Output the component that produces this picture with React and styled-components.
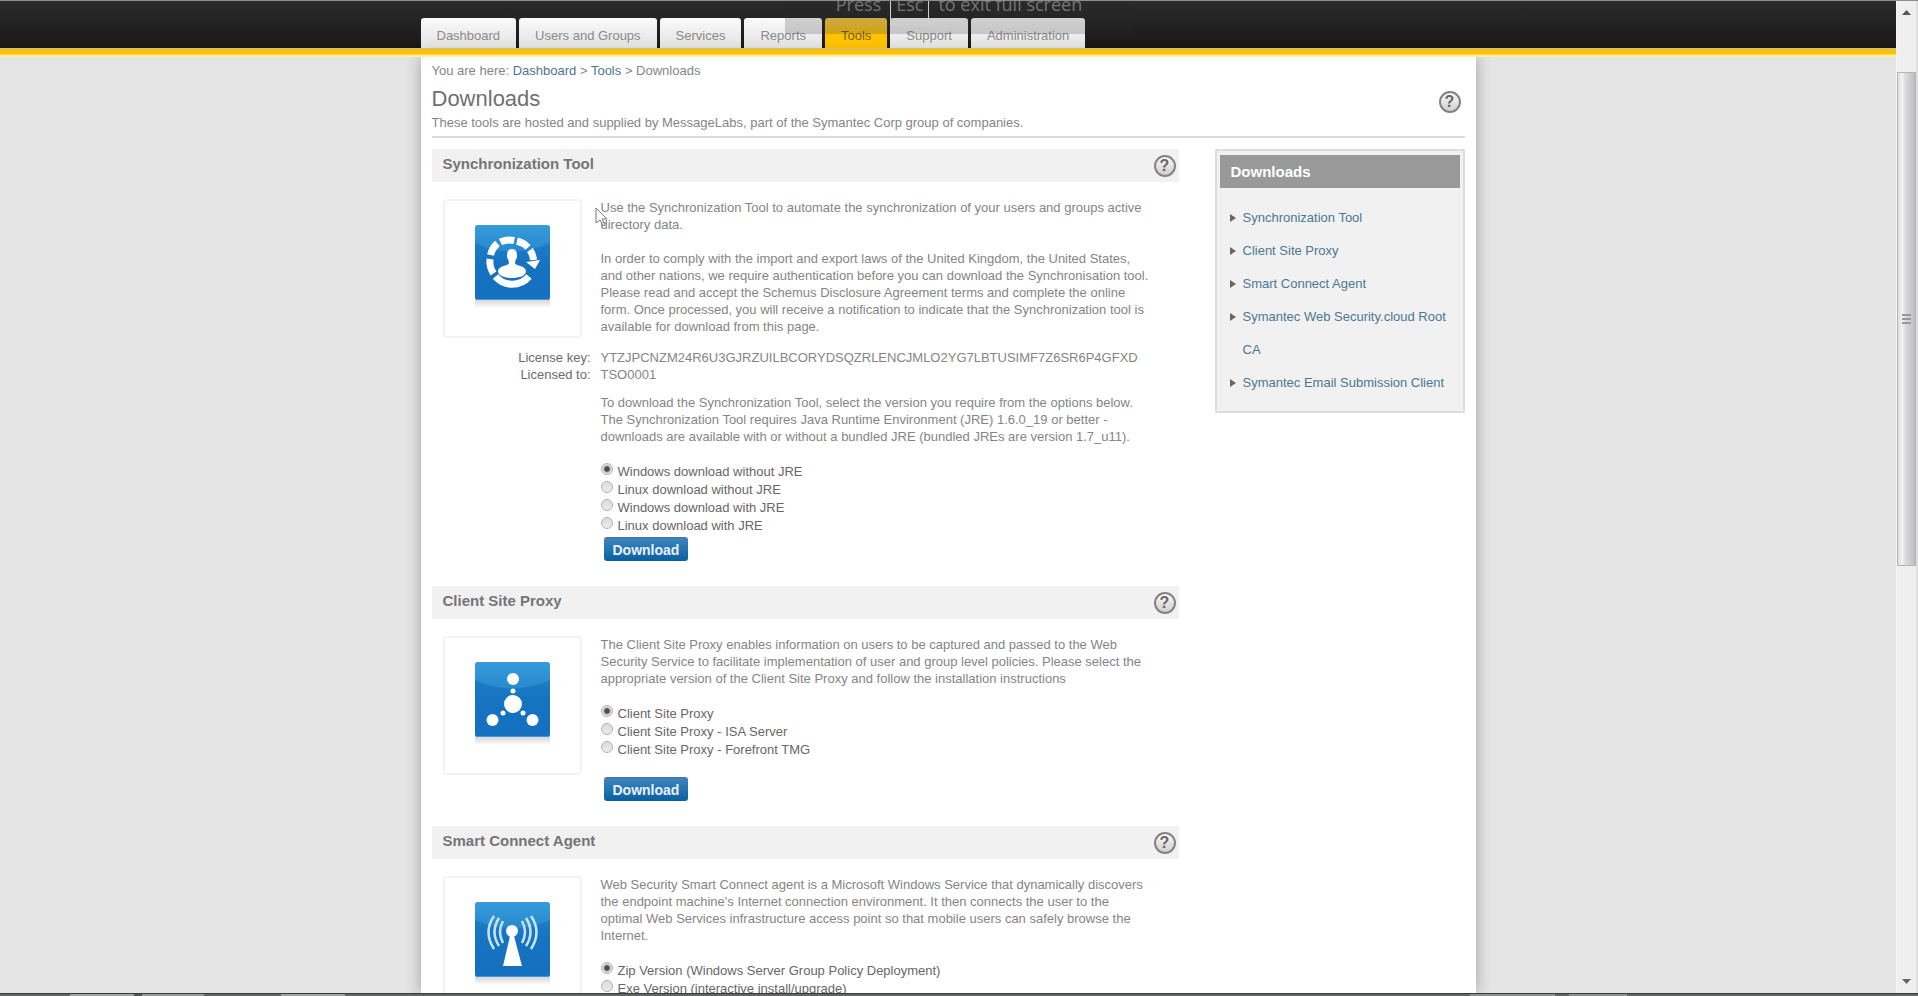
import React from 'react'
import styled, { createGlobalStyle } from 'styled-components'

const tabs = ['Dashboard', 'Users and Groups', 'Services', 'Reports', 'Tools', 'Support', 'Administration']

const sideLinks = [
    'Synchronization Tool',
    'Client Site Proxy',
    'Smart Connect Agent',
    'Symantec Web Security.cloud Root CA',
    'Symantec Email Submission Client',
]

const TileBase = ({ id, children }) => (
    <svg width="81" height="86" viewBox="0 0 81 86" aria-hidden="true">
        <defs>
            <linearGradient id={`${id}-fill`} x1="0" y1="0" x2="0" y2="1">
                <stop offset="0" stopColor="#2187cf" />
                <stop offset="0.5" stopColor="#1673c0" />
                <stop offset="1" stopColor="#1570bf" />
            </linearGradient>
            <linearGradient id={`${id}-gloss`} x1="0" y1="0" x2="0" y2="1">
                <stop offset="0" stopColor="#4bb0e6" stopOpacity="0.5" />
                <stop offset="1" stopColor="#45a6e0" stopOpacity="0.35" />
            </linearGradient>
            <linearGradient id={`${id}-shade`} x1="0" y1="0" x2="0" y2="1">
                <stop offset="0" stopColor="#d0ccca" />
                <stop offset="1" stopColor="#fff" />
            </linearGradient>
        </defs>
        <rect x="3" y="74" width="75" height="10" fill={`url(#${id}-shade)`} />
        <rect x="3" y="1" width="75" height="75" rx="3" fill={`url(#${id}-fill)`} />
        <path d="M3 4a3 3 0 0 1 3-3h69a3 3 0 0 1 3 3v15Q40 36 3 19z" fill={`url(#${id}-gloss)`} />
        <path d="M5 75.500H76" stroke="#3f97de" />
        {children}
    </svg>
)

const SyncIcon = () => (
    <TileBase id="sync">
        <g fill="none" stroke="#fff" strokeWidth="7">
            <path d="M28.400 17.900A22 22 0 0 1 42.200 16.500" />
            <path d="M45 17A22 22 0 0 1 56 23.500" />
            <path d="M58 26A22 22 0 0 1 61.500 36" />
            <path d="M25.500 19.500A22 22 0 0 0 18.500 31" />
            <path d="M18 35A22 22 0 0 0 21.500 49.500" />
            <path d="M23.500 52.500A22 22 0 0 0 57 52.500" />
        </g>
        <path d="M54 38l14-2-5 9z" fill="#fff" />
        <path
            d="M40 25c4 0 5 3 5 7 0 3-2 4-2 7 0 3 10 2 11 8 0 5-7 7-14 7s-14-2-14-7c1-6 11-5 11-8 0-3-2-4-2-7 0-4 1-7 5-7z"
            fill="#fff"
        />
    </TileBase>
)

const ProxyIcon = () => (
    <TileBase id="proxy">
        <g fill="#fff">
            <circle cx="41" cy="18" r="6" />
            <circle cx="41" cy="30" r="2.500" />
            <circle cx="41" cy="43" r="9" />
            <circle cx="31" cy="52" r="2.500" />
            <circle cx="51" cy="52" r="2.500" />
            <circle cx="20.500" cy="59" r="6" />
            <circle cx="60.500" cy="59" r="6" />
        </g>
    </TileBase>
)

const AgentIcon = () => (
    <TileBase id="agent">
        <g fill="#fff">
            <circle cx="40" cy="30" r="6" />
            <path d="M38 35h4l8 30H31z" />
        </g>
        <g fill="none" stroke="#c6e4fb" strokeWidth="2.500">
            <path d="M31 20q-6 11 0 22" />
            <path d="M27 17q-9 14 0 28" />
            <path d="M22 15q-11 16 0 33" />
            <path d="M50 20q6 11 0 22" />
            <path d="M54 17q9 14 0 28" />
            <path d="M59 15q11 16 0 33" />
        </g>
    </TileBase>
)

const Help = () => <HelpButton type="button" aria-label="Help">?</HelpButton>

const Options = ({ name, items }) => (
    <OptionList>
        {items.map((item, i) => (
            <Option key={item}>
                <Radio type="radio" name={name} defaultChecked={i === 0} />
                {item}
            </Option>
        ))}
    </OptionList>
)

const Section = ({ title, icon, children }) => (
    <SectionBox>
        <SectionBar>
            <SectionTitle>{title}</SectionTitle>
            <Help />
        </SectionBar>
        <SectionGrid>
            <IconFrame>{icon}</IconFrame>
            {children}
        </SectionGrid>
    </SectionBox>
)

const App = () => {
    return (
        <Screen>
            <GlobalStyle />
            <Viewport>
                <Page>
                    <Header>
                        <Nav>
                            {tabs.map((tab) => (
                                <Tab href="#" key={tab} $active={tab === 'Tools'}>{tab}</Tab>
                            ))}
                        </Nav>
                    </Header>
                    <Stripe />
                    <Container>
                        <div>
                            You are here: <Link href="#">Dashboard</Link> &gt; <Link href="#">Tools</Link> &gt; Downloads
                        </div>
                        <TitleRow>
                            <div>
                                <Title>Downloads</Title>
                                <Subtitle>
                                    These tools are hosted and supplied by MessageLabs, part of the Symantec Corp group of companies.
                                </Subtitle>
                            </div>
                            <Help />
                        </TitleRow>
                        <Columns>
                            <Main>
                                <Section title="Synchronization Tool" icon={<SyncIcon />}>
                                    <Content>
                                        <Text>
                                            Use the Synchronization Tool to automate the synchronization of your users and groups active directory data.
                                        </Text>
                                        <Text>
                                            In order to comply with the import and export laws of the United Kingdom, the United States, and other nations, we require authentication before you can download the Synchronisation tool. Please read and accept the Schemus Disclosure Agreement terms and complete the online form. Once processed, you will receive a notification to indicate that the Synchronization tool is available for download from this page.
                                        </Text>
                                        <Cursor width="13" height="20" viewBox="0 0 13 20" aria-hidden="true">
                                            <path d="M1 1v15l4-3 3 6 2-1-3-6h5z" fill="#fff" fillOpacity="0.6" stroke="#777" />
                                        </Cursor>
                                    </Content>
                                    <License>
                                        <dt>License key:</dt>
                                        <dd>YTZJPCNZM24R6U3GJRZUILBCORYDSQZRLENCJMLO2YG7LBTUSIMF7Z6SR6P4GFXD</dd>
                                        <dt>Licensed to:</dt>
                                        <dd>TSO0001</dd>
                                    </License>
                                    <Content>
                                        <Text>
                                            To download the Synchronization Tool, select the version you require from the options below. The Synchronization Tool requires Java Runtime Environment (JRE) 1.6.0_19 or better - downloads are available with or without a bundled JRE (bundled JREs are version 1.7_u11).
                                        </Text>
                                        <Options
                                            name="sync"
                                            items={[
                                                'Windows download without JRE',
                                                'Linux download without JRE',
                                                'Windows download with JRE',
                                                'Linux download with JRE',
                                            ]}
                                        />
                                        <Download type="button" $gap={2}>Download</Download>
                                    </Content>
                                </Section>
                                <Section title="Client Site Proxy" icon={<ProxyIcon />}>
                                    <Content>
                                        <Text>
                                            The Client Site Proxy enables information on users to be captured and passed to the Web Security Service to facilitate implementation of user and group level policies. Please select the appropriate version of the Client Site Proxy and follow the installation instructions
                                        </Text>
                                        <Options
                                            name="proxy"
                                            items={['Client Site Proxy', 'Client Site Proxy - ISA Server', 'Client Site Proxy - Forefront TMG']}
                                        />
                                        <Download type="button" $gap={18}>Download</Download>
                                    </Content>
                                </Section>
                                <Section title="Smart Connect Agent" icon={<AgentIcon />}>
                                    <Content>
                                        <Text>
                                            Web Security Smart Connect agent is a Microsoft Windows Service that dynamically discovers the endpoint machine's Internet connection environment. It then connects the user to the optimal Web Services infrastructure access point so that mobile users can safely browse the Internet.
                                        </Text>
                                        <Options
                                            name="agent"
                                            items={['Zip Version (Windows Server Group Policy Deployment)', 'Exe Version (interactive install/upgrade)']}
                                        />
                                    </Content>
                                </Section>
                            </Main>
                            <Sidebar>
                                <SidebarTitle>Downloads</SidebarTitle>
                                <SideList>
                                    {sideLinks.map((link) => (
                                        <SideItem key={link}>
                                            <Arrow width="6" height="8" viewBox="0 0 6 8" aria-hidden="true">
                                                <path d="M0 0l6 4-6 4z" fill="#666" />
                                            </Arrow>
                                            <Link href="#">{link}</Link>
                                        </SideItem>
                                    ))}
                                </SideList>
                            </Sidebar>
                        </Columns>
                    </Container>
                </Page>
                <Scrollbar>
                    <ScrollArrow width="9" height="5" viewBox="0 0 9 5" aria-hidden="true">
                        <path d="M4.500 0l4.500 5H0z" fill="#555" />
                    </ScrollArrow>
                    <ScrollTrack>
                        <ScrollThumb>
                            <Grip />
                            <Grip />
                            <Grip />
                        </ScrollThumb>
                    </ScrollTrack>
                    <ScrollArrow width="9" height="5" viewBox="0 0 9 5" aria-hidden="true">
                        <path d="M4.500 5l4.500-5H0z" fill="#666" />
                    </ScrollArrow>
                </Scrollbar>
            </Viewport>
            <Taskbar />
            <FullScreenHint>
                Press <EscKey>Esc</EscKey> to exit full screen
            </FullScreenHint>
        </Screen>
    )
}

export default App

const GlobalStyle = createGlobalStyle`
* {
    box-sizing: border-box;
}
body {
    margin: 0;
    overflow: hidden;
    background-color: #e4e4e4;
    color: #858585;
    font-family: "Liberation Sans", Arial, sans-serif;
    font-size: 13px;
    line-height: 17px;
}
`

const Screen = styled.div`
position: relative;
height: 100vh;
display: flex;
flex-direction: column;
overflow: hidden;
border-top: 1px solid #8c8e8d;
`

const Viewport = styled.div`
flex: 1;
min-height: 0;
display: flex;
`

const Page = styled.div`
flex: 1;
display: flex;
flex-direction: column;
overflow: hidden;
`

const Header = styled.header`
flex: none;
height: 47px;
padding-top: 17px;
background: linear-gradient(#2c2c2c, #1a1718);
`

const Nav = styled.nav`
max-width: 1055px;
height: 100%;
margin: 0 auto;
display: flex;
gap: 3px;
`

const Tab = styled.a`
padding: 0 16px;
border-radius: 3px 3px 0 0;
background: ${(props) => (props.$active ? 'linear-gradient(#f3cb4c, #fec200 60%)' : 'linear-gradient(#fafafa, #e2e2e2)')};
color: ${(props) => (props.$active ? '#776018' : '#8a8a8a')};
line-height: 35px;
text-decoration: none;
`

const Stripe = styled.div`
flex: none;
height: 9px;
position: relative;
background: linear-gradient(#d8bd5c 2px, #fdc100 2px, #fdc100 6px, #fff09a 7px);
`

const Container = styled.div`
flex: 1;
width: 100%;
max-width: 1055px;
min-height: 0;
margin: 0 auto;
padding: 5px 11px 0;
background-color: #fff;
box-shadow: 0 0 14px rgba(0, 0, 0, 0.3);
`

const Link = styled.a`
color: #4d7790;
text-decoration: none;
`

const TitleRow = styled.div`
display: flex;
justify-content: space-between;
align-items: flex-start;
padding: 10px 4px 6px 0;
border-bottom: 2px solid #dcdcdc;

& > button {
    margin-top: 2px;
}
`

const Title = styled.h1`
margin: 0 0 7px;
color: #707070;
font-size: 22px;
font-weight: normal;
line-height: 20px;
`

const Subtitle = styled.p`
margin: 0;
line-height: 14px;
`

const Columns = styled.div`
display: flex;
align-items: flex-start;
gap: 36px;
padding-top: 11px;
`

const Main = styled.main`
flex: 1;
`

const SectionBox = styled.section`
margin-bottom: 25px;
`

const SectionBar = styled.div`
display: flex;
justify-content: space-between;
align-items: center;
height: 33px;
padding: 0 3px 0 11px;
background-color: #f1f1f1;
`

const SectionTitle = styled.h2`
margin: 0 0 4px;
color: #757575;
font-size: 15px;
`

const HelpButton = styled.button`
width: 22px;
height: 22px;
padding: 0;
border: 2px solid #838383;
border-radius: 50%;
background: linear-gradient(#fafafa, #cfcfcf);
color: #666;
font: bold 16px/18px "Liberation Sans", Arial, sans-serif;
`

const SectionGrid = styled.div`
display: grid;
grid-template-columns: 148px 1fr;
column-gap: 10px;
padding: 17px 28px 0 11px;
`

const IconFrame = styled.div`
display: flex;
justify-content: center;
align-items: flex-start;
width: 139px;
height: 139px;
padding-top: 23px;
border: 2px solid #f3f3f3;
border-radius: 4px;
`

const Content = styled.div`
position: relative;
grid-column: 2;
`

const Text = styled.p`
margin: 0;

& + & {
    margin-top: 17px;
}
`

const Cursor = styled.svg`
position: absolute;
left: -6px;
top: 8px;
`

const License = styled.dl`
grid-column: 1 / -1;
display: grid;
grid-template-columns: 148px 1fr;
column-gap: 10px;
margin: 11px 0;

& dt {
    color: #6f6a6c;
    text-align: right;
}

& dd {
    margin: 0;
}
`

const OptionList = styled.div`
margin-top: 18px;
`

const Option = styled.label`
display: flex;
gap: 5px;
height: 18px;
color: #6a6568;
line-height: 18px;
`

const Radio = styled.input`
appearance: none;
width: 12px;
height: 12px;
margin: 0;
border: 1px solid #b2b2b2;
border-radius: 50%;
background: linear-gradient(#dcdcdc, #ececec);

&:checked {
    background: radial-gradient(circle, #4c4c4c 2px, #e2e2e2 4px);
}
`

const Download = styled.button`
display: block;
height: 24px;
margin: ${(props) => props.$gap}px 0 0 3px;
padding: 0 9px;
border: 0;
border-top: 1px solid #5c6c7c;
border-radius: 3px;
background: linear-gradient(#3d85c2, #0b5f9f);
color: #e6f3fd;
font: bold 14px/20px "Liberation Sans", Arial, sans-serif;
`

const Sidebar = styled.aside`
width: 250px;
padding: 4px 3px 12px;
border: 2px solid #dcdcdc;
background-color: #f1f1f1;
`

const SidebarTitle = styled.h2`
margin: 0 0 13px;
padding: 0 11px;
background-color: #999;
color: #fff;
font-size: 15px;
line-height: 33px;
`

const SideList = styled.ul`
margin: 0;
padding: 0 8px;
list-style: none;
`

const SideItem = styled.li`
display: flex;
gap: 7px;
line-height: 33px;
`

const Arrow = styled.svg`
flex: none;
margin: 13px 0 0 2px;
`

const Scrollbar = styled.div`
flex: none;
width: 22px;
display: flex;
flex-direction: column;
align-items: center;
border-left: 1px solid #f6f6f6;
border-right: 2px solid #dedede;
background-color: #efefef;
`

const ScrollArrow = styled.svg`
flex: none;
margin: 9px 0;
`

const ScrollTrack = styled.div`
flex: 1;
align-self: stretch;
padding-top: 48px;
`

const ScrollThumb = styled.div`
display: flex;
flex-direction: column;
justify-content: center;
align-items: center;
gap: 2px;
height: 55%;
border: 1px solid #b4b4b6;
background: linear-gradient(90deg, #dedee0, #f2f2f4 25%, #dadadc 45%, #bdbdc0);
`

const Grip = styled.span`
width: 9px;
height: 2px;
background-color: #98989a;
`

const Taskbar = styled.footer`
flex: none;
height: 3px;
border-top: 1px solid #3a3c3b;
background: linear-gradient(
    90deg,
    #636665 70px, #a0a3a1 70px, #a0a3a1 134px, #555 134px, #555 142px,
    #989b99 142px, #989b99 204px, #636665 204px, #636665 281px,
    #a0a3a1 281px, #a0a3a1 345px, #636665 345px, #636665 1470px,
    #8e918f 1470px, #8e918f 1555px, #636665 1555px, #636665 1569px,
    #8e918f 1569px, #8e918f 1627px, #636665 1627px
);
`

const FullScreenHint = styled.div`
position: absolute;
top: -1px;
left: 50%;
display: flex;
justify-content: center;
gap: 9px;
width: 348px;
height: 34px;
margin-left: -174px;
background-color: rgba(40, 40, 40, 0.2);
color: #747474;
font-family: "Open Sans", "Noto Sans", sans-serif;
font-size: 18px;
line-height: 8px;
pointer-events: none;
`

const EscKey = styled.kbd`
height: 25px;
padding: 0 5px;
border: 1px solid #d0d0d0;
border-top: 0;
border-radius: 0 0 2px 2px;
font: inherit;
`
